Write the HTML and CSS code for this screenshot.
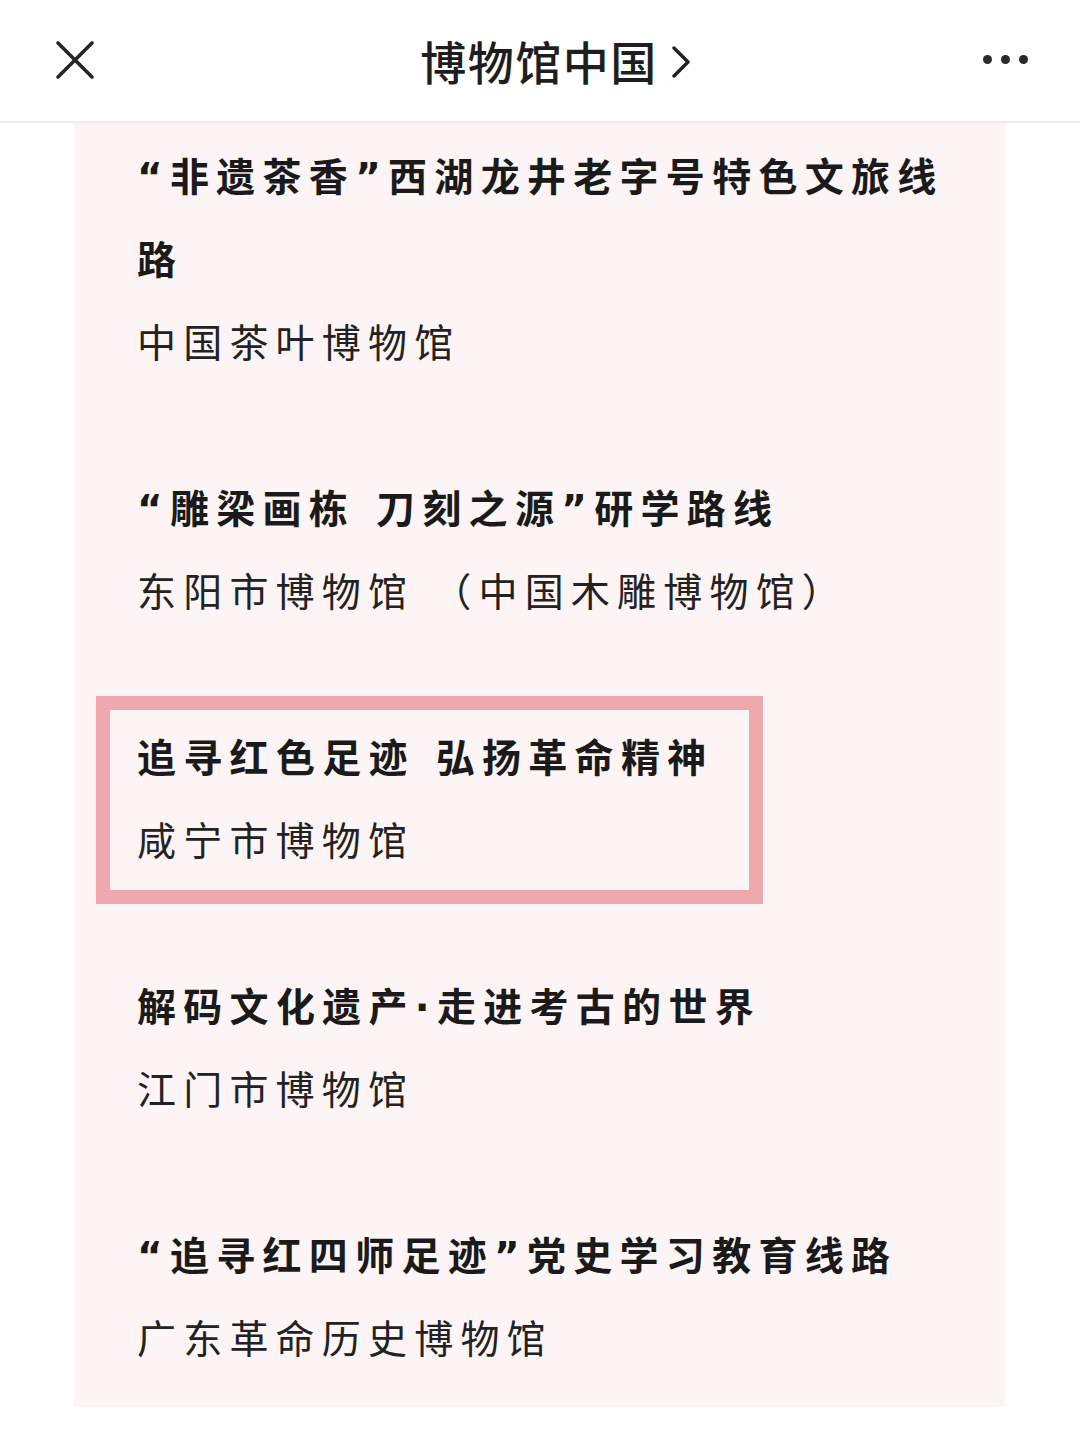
FILE: index.html
```html
<!DOCTYPE html>
<html lang="zh-CN">
<head>
<meta charset="utf-8">
<link rel="stylesheet" href="styles.css">
</head>
<body>
<header class="topbar">
  <div class="close">
    <svg width="40" height="40" viewBox="0 0 40 40"><path d="M3 3 L37 37 M37 3 L3 37" stroke="#262626" stroke-width="3.6" stroke-linecap="round" fill="none"/></svg>
  </div>
  <div class="title"><span class="title-text">博物馆中国<svg class="chev" width="20" height="32" viewBox="0 0 20 32"><path d="M3 2 L17 16 L3 30" stroke="#222" stroke-width="3.4" fill="none" stroke-linecap="round" stroke-linejoin="round"/></svg></span></div>
  <div class="more"><span></span><span></span><span></span></div>
</header>
<main class="panel">
  <section class="item">
    <p class="name">“非遗茶香”西湖龙井老字号特色文旅线路</p>
    <p class="org">中国茶叶博物馆</p>
  </section>
  <section class="item">
    <p class="name">“雕梁画栋 刀刻之源”研学路线</p>
    <p class="org">东阳市博物馆 （中国木雕博物馆）</p>
  </section>
  <section class="item highlight">
    <p class="name">追寻红色足迹 弘扬革命精神</p>
    <p class="org">咸宁市博物馆</p>
  </section>
  <section class="item">
    <p class="name">解码文化遗产·走进考古的世界</p>
    <p class="org">江门市博物馆</p>
  </section>
  <section class="item">
    <p class="name">“追寻红四师足迹”党史学习教育线路</p>
    <p class="org">广东革命历史博物馆</p>
  </section>
</main>
</body>
</html>
```
FILE: styles.css
```css
* { box-sizing: border-box; }
html, body { margin: 0; padding: 0; background: #ffffff; }
body {
  width: 1080px;
  height: 1448px;
  overflow: hidden;
  font-family: "Noto Sans CJK SC", "Noto Sans", sans-serif;
  color: #1c1c1c;
}
.topbar {
  height: 123px;
  border-bottom: 2px solid #ececec;
  display: flex;
  align-items: center;
  justify-content: space-between;
  padding: 0 52px 0 55px;
  position: relative;
}
.close { width: 40px; height: 40px; display: flex; margin-top: -2px; }
.title {
  position: absolute;
  left: 0; right: 0;
  text-align: center;
  font-size: 46px;
  font-weight: 500;
  letter-spacing: 1.5px;
  color: #1e1e1e;
  margin-top: -2px;
  pointer-events: none;
}
.title-text { position: relative; left: -1px; }
.chev { position: absolute; left: calc(100% + 13px); top: 50%; margin-top: -14px; }
.more { display: flex; gap: 9px; margin-top: -2px; }
.more span {
  width: 9px; height: 9px; border-radius: 50%; background: #2a2a2a;
}
.panel {
  margin: 0 75px 0 74px;
  background: #fdf4f5;
  padding: 13px 40px 26px 63px;
}
.item { margin-bottom: 83px; }
.item:last-child { margin-bottom: 0; }
.item p {
  margin: 0;
  line-height: 83px;
  font-size: 39px;
  font-family: "Liberation Sans", "Noto Sans CJK SC", sans-serif;
}
.item p.name {
  font-family: "DejaVu Sans", "Noto Sans CJK SC", sans-serif;
  font-weight: 700;
  letter-spacing: 7.3px;
  color: #1a1a1a;
}
.org { font-weight: 400; letter-spacing: 7.2px; color: #222; }
.highlight {
  width: 667px;
  margin-left: -41px;
  margin-top: -21px;
  margin-bottom: 62px;
  border: 14px solid #f0a8af;
  padding: 7px 0 7px 27px;
}
```
